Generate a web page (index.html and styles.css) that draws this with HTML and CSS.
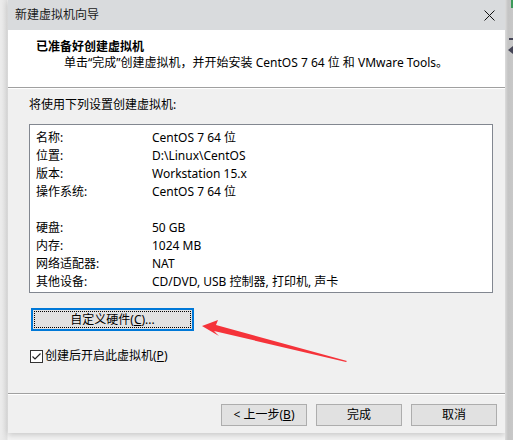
FILE: index.html
```html
<!DOCTYPE html>
<html lang="zh-CN">
<head>
<meta charset="utf-8">
<title>新建虚拟机向导</title>
<link rel="stylesheet" href="styles.css">
</head>
<body>
<div class="desk">
  <div class="window">
    <div class="titlebar">
      <span class="title">新建虚拟机向导</span>
      <svg class="close" width="11" height="11" viewBox="0 0 11 11"><path d="M0.5 0.5 L10.5 10.5 M10.5 0.5 L0.5 10.5" stroke="#111" stroke-width="1" fill="none"/></svg>
    </div>
    <div class="header">
      <div class="h-title">已准备好创建虚拟机</div>
      <div class="h-sub">单击“完成”创建虚拟机，并开始安装 CentOS 7 64 位 和 VMware Tools。</div>
    </div>
    <div class="sep"></div>
    <div class="body">
      <div class="intro">将使用下列设置创建虚拟机:</div>
      <div class="listbox">
        <div class="row"><span class="k">名称:</span><span class="v">CentOS 7 64 位</span></div>
        <div class="row"><span class="k">位置:</span><span class="v">D:\Linux\CentOS</span></div>
        <div class="row"><span class="k">版本:</span><span class="v">Workstation 15.x</span></div>
        <div class="row"><span class="k">操作系统:</span><span class="v">CentOS 7 64 位</span></div>
        <div class="row"></div>
        <div class="row"><span class="k">硬盘:</span><span class="v">50 GB</span></div>
        <div class="row"><span class="k">内存:</span><span class="v">1024 MB</span></div>
        <div class="row"><span class="k">网络适配器:</span><span class="v">NAT</span></div>
        <div class="row"><span class="k">其他设备:</span><span class="v">CD/DVD, USB 控制器, 打印机, 声卡</span></div>
      </div>
      <button class="btn custom"><span class="focus">自定义硬件(<u>C</u>)...</span></button>
      <label class="check">
        <span class="box"><svg width="11" height="11" viewBox="0 0 11 11"><path d="M1.5 5.5 L4 8 L9.5 2.5" stroke="#222" stroke-width="1.2" fill="none"/></svg></span>
        <span>创建后开启此虚拟机(<u>P</u>)</span>
      </label>
    </div>
    <div class="sep sep2"></div>
    <div class="footer">
      <button class="btn">&lt; 上一步(<u>B</u>)</button>
      <button class="btn">完成</button>
      <button class="btn">取消</button>
    </div>
    <svg class="arrow" width="160" height="50" viewBox="0 0 160 50">
      <path d="M2 6 L18 0 L16 5 L147 41 L146 42 L14 11 L19 16 Z" fill="#f5333a"/>
    </svg>
  </div>
  <div class="behind">
    <div class="green"></div>
    <div class="glyph"></div>
    <div class="glyph2"></div>
  </div>
</div>
</body>
</html>
```
FILE: styles.css
```css
* { box-sizing: border-box; }
html, body { margin: 0; padding: 0; }
body {
  width: 513px;
  height: 440px;
  overflow: hidden;
  background: #f3f3f3;
  font-family: "Noto Sans", "Noto Sans CJK SC", sans-serif;
  font-size: 12px;
  color: #000;
}
.desk {
  display: flex;
  height: 440px;
  padding-left: 8px;
  background: linear-gradient(to right, #ececec 0, #e2e2e2 7px, #f3f3f3 8px);
}
.window {
  position: relative;
  width: 497px;
  height: 433px;
  background: #f0f0f0;
  display: flex;
  flex-direction: column;
  box-shadow: 0 2px 6px rgba(0,0,0,0.18);
}
.titlebar {
  height: 30px;
  background: #d9dbdd;
  display: flex;
  align-items: center;
  justify-content: space-between;
  padding: 0 10px 0 7px;
  line-height: 16px;
}
.title { color: #1a1a1a; }
.header {
  height: 57px;
  background: #fff;
  padding: 9px 0 0 28px;
  line-height: 16px;
}
.h-title { font-weight: bold; }
.h-sub { padding-left: 28px; }
.sep {
  height: 2px;
  border-top: 1px solid #a0a0a0;
  border-bottom: 1px solid #fff;
}
.body {
  height: 303px;
  padding: 8px 0 0 21px;
  display: flex;
  flex-direction: column;
  align-items: flex-start;
  line-height: 16px;
}
.intro { height: 16px; }
.listbox {
  margin-top: 11px;
  width: 464px;
  height: 169px;
  background: #fff;
  border: 1px solid #828790;
  padding: 4px 0 0 6px;
}
.row {
  display: flex;
  height: 18px;
  line-height: 18px;
}
.k { width: 116px; }
.btn {
  font-family: inherit;
  font-size: 12px;
  color: #000;
  background: #e1e1e1;
  border: 1px solid #adadad;
  width: 86px;
  height: 22px;
  padding: 0;
  margin: 0;
  line-height: 16px;
}
.custom {
  margin: 15px 0 0 2px;
  width: 163px;
  height: 23px;
  border: 2px solid #0078d7;
  padding: 1px;
}
.focus {
  display: flex;
  align-items: center;
  justify-content: center;
  height: 100%;
  border: 1px dotted #000;
}
.check {
  margin: 17px 0 0 1px;
  display: flex;
  align-items: center;
  gap: 2px;
}
.box {
  width: 13px;
  height: 13px;
  border: 1px solid #333;
  background: #fff;
  display: flex;
  align-items: center;
  justify-content: center;
}
.box svg { display: block; }
.sep2 { margin-top: 1px; }
.footer {
  flex: 1;
  display: flex;
  justify-content: flex-end;
  align-items: flex-start;
  gap: 9px;
  padding: 9px 8px 0 0;
}
u { text-decoration: underline; text-underline-offset: 1px; }
.arrow {
  position: absolute;
  left: 192px;
  top: 320px;
}
.behind {
  flex: 1;
  background: linear-gradient(to right, #dcdcdc 0, #c4c4c4 3px, #c8c8c8 100%);
  position: relative;
}
.green {
  height: 8px;
  background: #3c9a5a;
  width: 2px;
  margin-left: 6px;
}
.glyph {
  position: absolute;
  left: 4px;
  top: 38px;
  width: 4px;
  height: 2px;
  background: #445;
}
.glyph2 {
  position: absolute;
  left: 3px;
  top: 46px;
  width: 5px;
  height: 8px;
  background: #445;
  clip-path: polygon(100% 0, 0 50%, 100% 100%);
}
```
